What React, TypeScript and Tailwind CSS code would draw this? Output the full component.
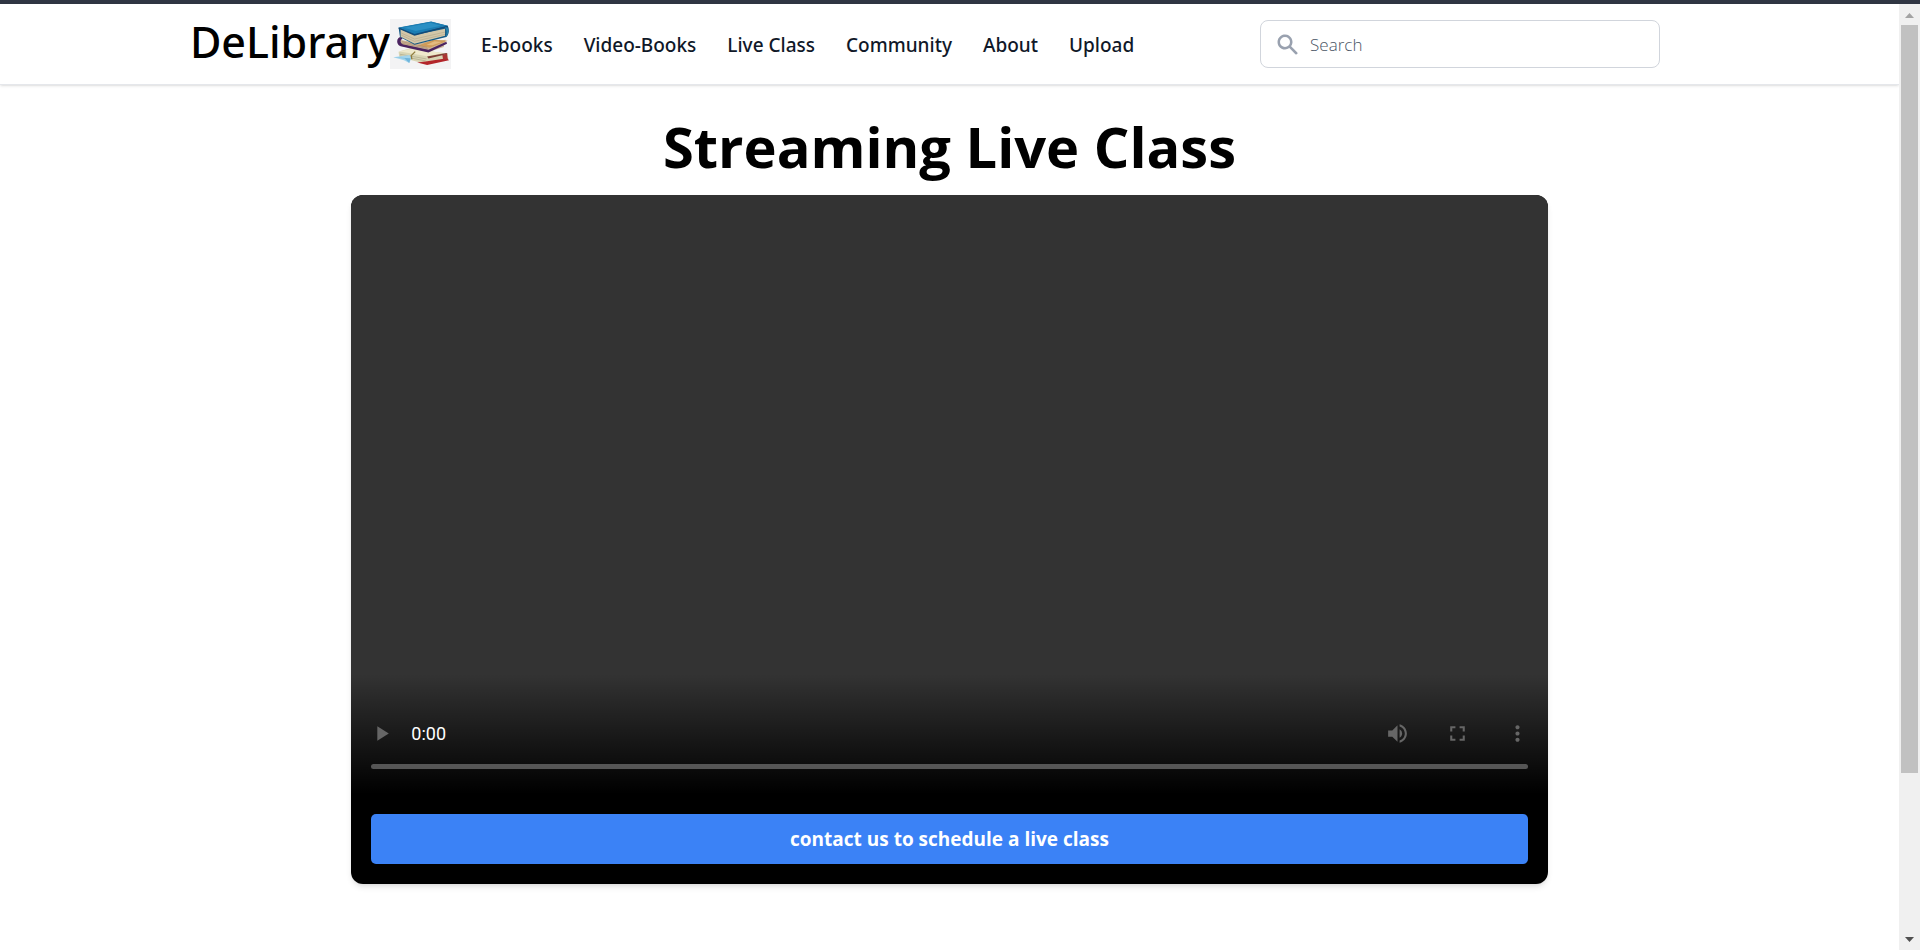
import { FC } from 'react'
import { HiSearch } from 'react-icons/hi'
import { MdFullscreen, MdMoreVert, MdPlayArrow, MdVolumeUp } from 'react-icons/md'

const links = ['E-books', 'Video-Books', 'Live Class', 'Community', 'About', 'Upload']

const BooksLogo: FC = () => (
  <svg viewBox="0 0 184 150" className="w-[61px] h-[50px] bg-[#f3f3f4]" aria-hidden="true">
    {/* bottom book */}
    <path d="M26 98 L60 88 L160 102 L174 105 L176 122 L108 134 L88 130 L28 114 Z" fill="#d9d5b4" />
    <path d="M26 97 L64 90 L160 102 L112 112 Z" fill="#efe9cc" />
    <path d="M112 113 L170 102 L174 105 L116 119 Z" fill="#7d3d35" />
    <path d="M82 131 L112 127 L172 118 L178 124 L112 138 Z" fill="#b3262b" />
    <path d="M158 108 L172 104 L174 120 L160 122 Z" fill="#a93434" />
    <path d="M30 106 L110 120 M30 111 L108 126" stroke="#aba789" strokeWidth="2" fill="none" />
    {/* ribbon */}
    <path d="M10 115 L58 108 L66 116 L58 132 L42 124 Z" fill="#a4d5ec" />
    <path d="M10 115 L44 119 L58 132 L62 118 Z" fill="#70b6dc" />
    <path d="M76 98 L64 110 L66 121" stroke="#8f7b3c" strokeWidth="4" fill="none" />
    {/* middle book */}
    <path d="M30 62 L80 72 L168 62 L162 84 L116 99 L32 80 Z" fill="#cdb596" />
    <path d="M84 80 L130 62 L174 65 L120 86 Z" fill="#cf9c5a" />
    <path d="M110 78 L134 67 L156 69 L128 79 Z" fill="#e3bb80" />
    <path d="M34 54 C18 54 18 78 32 82 L116 101 L172 74 L170 68 L116 92 L38 76 C30 70 30 62 38 60 Z" fill="#4b2360" />
    <path d="M36 68 L112 85 M36 73 L114 89" stroke="#a88c72" strokeWidth="2" fill="none" />
    {/* top book */}
    <path d="M26 26 L124 8 L174 20 C180 32 178 46 170 54 L74 77 L30 54 Z" fill="#155a85" />
    <path d="M32 30 L74 48 L166 29 L166 50 L74 74 L32 53 Z" fill="#d3c7a9" />
    <path d="M34 42 L74 60 L166 39 M34 48 L74 67 L166 46" stroke="#b5aa8c" strokeWidth="2" fill="none" />
    <path d="M26 25 L124 7 L174 20 L74 46 Z" fill="#1b7db3" />
    <path d="M42 26 L122 11 L154 20 L78 36 Z" fill="#2b90c4" />
    <path d="M26 25 L74 45 L174 20 L174 24 L74 50 L26 29 Z" fill="#124c7b" />
    <path d="M166 25 C178 20 180 44 168 54 C172 44 172 34 166 25 Z" fill="#2682ad" />
  </svg>
)

const NavBar: FC = () => (
  <header className="border-b border-gray-200 shadow-sm">
    <nav className="mx-auto flex h-20 w-4/5 items-center justify-between pr-[49px]">
      <div className="flex items-center">
        <a href="#" className="flex items-center text-black">
          <span className="pb-1.5 font-['Noto_Sans',sans-serif] text-[43px] leading-none font-medium">
            DeLibrary
          </span>
          <BooksLogo />
        </a>
        <ul className="ml-[30px] flex gap-[31px] pt-0.5 font-['Noto_Sans',sans-serif] text-[19px] font-medium text-gray-900">
          {links.map((link) => (
            <li key={link}>
              <a href="#">{link}</a>
            </li>
          ))}
        </ul>
      </div>
      <label className="flex h-12 w-[400px] items-center gap-2.5 rounded-lg border border-gray-300 px-3.5">
        <HiSearch className="size-[25px] text-gray-400" />
        <input
          type="search"
          aria-label="Search"
          placeholder="Search"
          className="min-w-0 flex-1 pt-0.5 text-[17px] font-light outline-none placeholder:text-gray-600"
        />
      </label>
    </nav>
  </header>
)

const Player: FC = () => (
  <div className="flex aspect-[1197/599] flex-col justify-end bg-[#333]">
    <div className="bg-linear-to-b from-transparent to-black pt-[30px] pb-[25px]">
      <div className="flex h-[60px] items-center text-[#666]">
        <button aria-label="Play" className="flex w-[60px] justify-center">
          <MdPlayArrow size={25} />
        </button>
        <span className="flex-1 font-['Roboto',sans-serif] text-[18px] text-white">0:00</span>
        <button aria-label="Mute" className="flex w-[60px] justify-center">
          <MdVolumeUp size={25} />
        </button>
        <button aria-label="Full screen" className="flex w-[60px] justify-center">
          <MdFullscreen size={25} />
        </button>
        <button aria-label="More options" className="flex w-[60px] justify-center">
          <MdMoreVert size={25} />
        </button>
      </div>
      <div className="flex px-5">
        <input
          type="range"
          aria-label="Seek"
          defaultValue={0}
          className="h-[5px] w-full appearance-none rounded-full bg-[#555] [&::-webkit-slider-thumb]:size-0 [&::-webkit-slider-thumb]:appearance-none"
        />
      </div>
    </div>
  </div>
)

const ScrollBar: FC = () => (
  <div className="flex w-[21px] flex-col items-center bg-[#f0f0f0]" aria-hidden="true">
    <svg viewBox="0 0 21 21" className="h-[21px] w-full">
      <path d="M6 14 L10.5 9 L15 14 Z" fill="#a3a3a3" />
    </svg>
    <div className="w-[17px] flex-[748] bg-[#c1c1c1]" />
    <div className="flex-[156]" />
    <svg viewBox="0 0 21 21" className="h-[21px] w-full">
      <path d="M6 8 L10.5 13 L15 8 Z" fill="#505050" />
    </svg>
  </div>
)

const App: FC = () => {
  return (
    <div className="flex min-h-screen flex-col bg-white font-['Open_Sans','Noto_Sans',sans-serif]">
      <div className="h-1 bg-[#303643]" />
      <div className="flex flex-1">
        <div className="flex-1">
          <NavBar />
          <main className="mx-auto w-[63%] pt-[26px]">
            <h1 className="mb-3.5 text-center text-[56px] leading-[70px] font-bold text-black">
              Streaming Live Class
            </h1>
            <section className="overflow-hidden rounded-xl bg-black shadow-md">
              <Player />
              <div className="p-5">
                <button className="h-[50px] w-full rounded-[5px] bg-[#3b82f6] pt-0.5 text-[19px] font-bold text-white">
                  contact us to schedule a live class
                </button>
              </div>
            </section>
          </main>
        </div>
        <ScrollBar />
      </div>
    </div>
  )
}

export default App
